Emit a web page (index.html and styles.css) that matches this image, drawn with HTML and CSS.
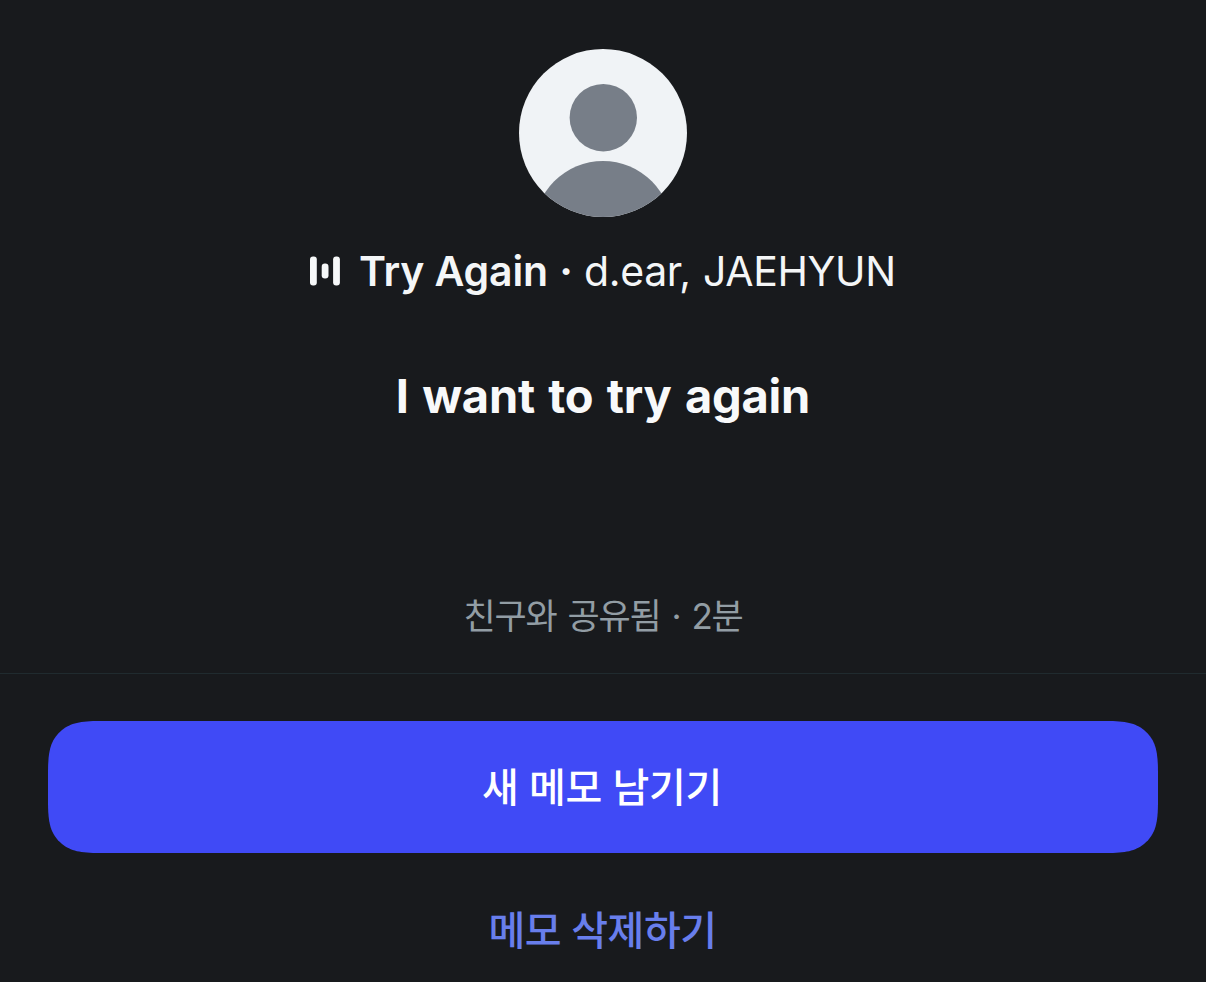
FILE: index.html
```html
<!DOCTYPE html>
<html lang="ko">
<head>
<meta charset="utf-8">
<title>메모</title>
<link rel="stylesheet" href="styles.css">
</head>
<body>
<main class="sheet">
  <section class="note">
    <svg class="avatar" viewBox="0 0 168 168" aria-hidden="true">
      <defs><clipPath id="round"><circle cx="84" cy="84" r="84"/></clipPath></defs>
      <g clip-path="url(#round)">
        <rect class="avatar-bg" width="168" height="168"/>
        <circle class="avatar-fg" cx="84.3" cy="68.7" r="33.7"/>
        <circle class="avatar-fg" cx="84" cy="181" r="69"/>
      </g>
    </svg>
    <div class="song">
      <svg class="bars" viewBox="0 0 30 30" aria-hidden="true">
        <rect x="0" y="0.5" width="6.8" height="29" rx="3"/>
        <rect x="11.7" y="7.5" width="6.8" height="15" rx="3.2"/>
        <rect x="23.1" y="0.5" width="6.8" height="29" rx="3"/>
      </svg>
      <span class="song-title">Try Again</span>
      <span class="song-dot">·</span>
      <span class="song-artist">d.ear, JAEHYUN</span>
    </div>
    <h1 class="message">I want to try again</h1>
    <p class="meta">친구와 공유됨 · 2분</p>
  </section>
  <section class="actions">
    <button class="primary">
      <svg class="primary-shape" viewBox="0 0 1110 132" aria-hidden="true">
        <path d="M52 0H1058C1078 0 1087 2 1096 9C1108 19 1110 31 1110 52V80C1110 101 1108 113 1096 123C1087 130 1078 132 1058 132H52C32 132 23 130 14 123C2 113 0 101 0 80V52C0 31 2 19 14 9C23 2 32 0 52 0Z"/>
      </svg>
      <span class="primary-label">새 메모 남기기</span>
    </button>
    <button class="secondary">메모 삭제하기</button>
  </section>
</main>
</body>
</html>
```
FILE: styles.css
```css
* { box-sizing: border-box; }
body {
  margin: 0;
  background: #181a1d;
  font-family: Inter, "Noto Sans CJK KR", sans-serif;
}
.sheet { height: 982px; overflow: hidden; }
.note {
  height: 674px;
  padding-top: 49px;
  display: flex;
  flex-direction: column;
  align-items: center;
  border-bottom: 1px solid #202b2f;
}
.avatar { width: 168px; height: 168px; flex: none; }
.avatar-bg { fill: #f0f3f6; }
.avatar-fg { fill: #777e88; }
.song {
  width: 586px;
  height: 50px;
  margin-top: 29px;
  display: flex;
  align-items: center;
  color: #f4f6f7;
  font-size: 41px;
  line-height: 50px;
  white-space: nowrap;
}
.bars { width: 30px; height: 30px; margin-right: 19px; fill: #f6f8f9; flex: none; }
.song-title { width: 188px; font-weight: 600; letter-spacing: -0.15px; }
.song-dot { width: 36px; padding-left: 2px; text-align: center; font-weight: 700; }
.song-artist { margin-left: 1px; font-weight: 400; letter-spacing: -0.35px; word-spacing: 1px; }
.message {
  margin: 70px 0 0;
  color: #f8f9fa;
  font-size: 47px;
  font-weight: 700;
  line-height: 60px;
  letter-spacing: -0.2px;
  word-spacing: 2.4px;
}
.meta {
  margin: 164px 0 0;
  color: #929da4;
  font-size: 35px;
  font-weight: 400;
  line-height: 52px;
  letter-spacing: -1.2px;
  word-spacing: 2.4px;
}
.actions {
  padding: 47px 48px 0;
  display: flex;
  flex-direction: column;
  align-items: center;
}
button {
  padding: 0;
  border: 0;
  background: none;
  font-family: inherit;
}
.primary {
  width: 1110px;
  height: 132px;
  display: grid;
  place-items: center;
}
.primary-shape { grid-area: 1 / 1; width: 1110px; height: 132px; fill: #404af6; }
.primary-label {
  grid-area: 1 / 1;
  padding: 1px 2px 0 0;
  color: #fff;
  font-size: 40px;
  font-weight: 500;
  line-height: 60px;
  letter-spacing: -0.25px;
}
.secondary {
  margin-top: 48px;
  padding-right: 1px;
  color: #687eec;
  font-size: 40px;
  font-weight: 500;
  line-height: 60px;
  letter-spacing: -0.5px;
}
```
